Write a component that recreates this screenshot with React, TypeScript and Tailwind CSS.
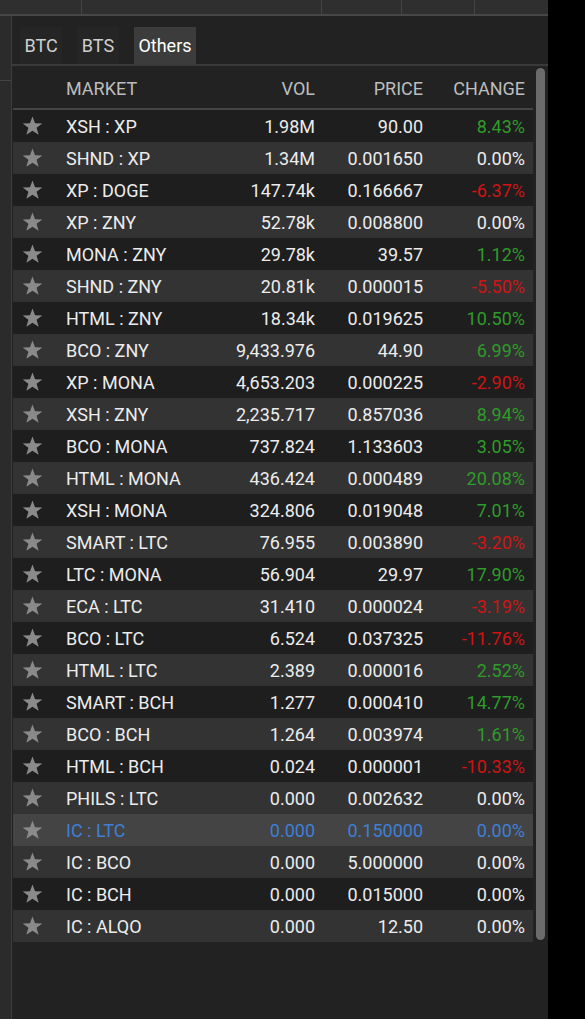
import React from "react";

type Market = {
  pair: string;
  vol: string;
  price: string;
  change: string;
  dir: "up" | "down" | "flat";
};

const markets: Market[] = [
  { pair: "XSH : XP", vol: "1.98M", price: "90.00", change: "8.43%", dir: "up" },
  { pair: "SHND : XP", vol: "1.34M", price: "0.001650", change: "0.00%", dir: "flat" },
  { pair: "XP : DOGE", vol: "147.74k", price: "0.166667", change: "-6.37%", dir: "down" },
  { pair: "XP : ZNY", vol: "52.78k", price: "0.008800", change: "0.00%", dir: "flat" },
  { pair: "MONA : ZNY", vol: "29.78k", price: "39.57", change: "1.12%", dir: "up" },
  { pair: "SHND : ZNY", vol: "20.81k", price: "0.000015", change: "-5.50%", dir: "down" },
  { pair: "HTML : ZNY", vol: "18.34k", price: "0.019625", change: "10.50%", dir: "up" },
  { pair: "BCO : ZNY", vol: "9,433.976", price: "44.90", change: "6.99%", dir: "up" },
  { pair: "XP : MONA", vol: "4,653.203", price: "0.000225", change: "-2.90%", dir: "down" },
  { pair: "XSH : ZNY", vol: "2,235.717", price: "0.857036", change: "8.94%", dir: "up" },
  { pair: "BCO : MONA", vol: "737.824", price: "1.133603", change: "3.05%", dir: "up" },
  { pair: "HTML : MONA", vol: "436.424", price: "0.000489", change: "20.08%", dir: "up" },
  { pair: "XSH : MONA", vol: "324.806", price: "0.019048", change: "7.01%", dir: "up" },
  { pair: "SMART : LTC", vol: "76.955", price: "0.003890", change: "-3.20%", dir: "down" },
  { pair: "LTC : MONA", vol: "56.904", price: "29.97", change: "17.90%", dir: "up" },
  { pair: "ECA : LTC", vol: "31.410", price: "0.000024", change: "-3.19%", dir: "down" },
  { pair: "BCO : LTC", vol: "6.524", price: "0.037325", change: "-11.76%", dir: "down" },
  { pair: "HTML : LTC", vol: "2.389", price: "0.000016", change: "2.52%", dir: "up" },
  { pair: "SMART : BCH", vol: "1.277", price: "0.000410", change: "14.77%", dir: "up" },
  { pair: "BCO : BCH", vol: "1.264", price: "0.003974", change: "1.61%", dir: "up" },
  { pair: "HTML : BCH", vol: "0.024", price: "0.000001", change: "-10.33%", dir: "down" },
  { pair: "PHILS : LTC", vol: "0.000", price: "0.002632", change: "0.00%", dir: "flat" },
  { pair: "IC : LTC", vol: "0.000", price: "0.150000", change: "0.00%", dir: "flat" },
  { pair: "IC : BCO", vol: "0.000", price: "5.000000", change: "0.00%", dir: "flat" },
  { pair: "IC : BCH", vol: "0.000", price: "0.015000", change: "0.00%", dir: "flat" },
  { pair: "IC : ALQO", vol: "0.000", price: "12.50", change: "0.00%", dir: "flat" },
];

const SELECTED = "IC : LTC";

const Star = () => (
  <svg width="21" height="20" viewBox="0 0 24 23" className="text-[#8a8a8a]">
    <polygon
      fill="currentColor"
      points="12,0.5 14.9,8.2 23.3,8.5 16.7,13.6 19.1,21.7 12,17 4.9,21.7 7.3,13.6 0.7,8.5 9.1,8.2"
    />
  </svg>
);

const changeColor = (m: Market) => {
  if (m.dir === "up") return "text-[#2f9b2a]";
  if (m.dir === "down") return "text-[#d01313]";
  return "text-[#ececec]";
};

const MarketRow = ({ data, index }: { data: Market; index: number }) => {
  const selected = data.pair === SELECTED;
  const bg = selected ? "bg-[#444444]" : index % 2 === 1 ? "bg-[#333333]" : "bg-[#1e1e1e]";
  const text = selected ? "text-[#3f7fd6]" : "text-[#ececec]";
  return (
    <div className={`flex h-[32px] items-center ${bg} ${text}`}>
      <div className="flex w-[38px] justify-center">
        <Star />
      </div>
      <div className="w-[174px] pl-[15px]">{data.pair}</div>
      <div className="w-[90px] text-right">{data.vol}</div>
      <div className="w-[108px] text-right">{data.price}</div>
      <div className={`w-[102px] text-right ${selected ? "" : changeColor(data)}`}>
        {data.change}
      </div>
    </div>
  );
};

const Tab = ({ label, active, width }: { label: string; active?: boolean; width: string }) => (
  <div
    className={`flex h-[37px] items-center justify-center ${width} ${
      active ? "bg-[#3c3c3c] text-white" : "bg-[#252525] text-[#cfcfcf]"
    }`}
  >
    {label}
  </div>
);

export default function App() {
  return (
    <div
      className="flex h-[1019px] w-[585px] overflow-hidden bg-black text-[18px]"
      style={{ fontFamily: "Roboto, 'Noto Sans', sans-serif" }}
    >
      <div className="flex w-[548px] flex-col">
        {/* top strip */}
        <div className="flex h-[16px] border-b-2 border-[#474747] bg-[#2f2f2f]">
          <div className="w-[82px] border-r border-[#444]" />
          <div className="w-[240px] border-r border-[#444]" />
          <div className="w-[80px] border-r border-[#444]" />
          <div className="w-[73px] border-r border-[#444]" />
          <div className="flex-1" />
        </div>

        <div className="flex flex-1">
          {/* left strip */}
          <div className="w-[12px] border-r border-[#3d3d3d] bg-[#2b2b2b]">
            <div className="mt-[64px] border-b border-[#444]" />
          </div>

          {/* main panel */}
          <div className="flex flex-1 flex-col bg-[#222222]">
            <div className="flex gap-[15px] pt-[11px] pl-[8px]">
              <Tab label="BTC" width="w-[42px]" />
              <Tab label="BTS" width="w-[42px]" />
              <Tab label="Others" width="w-[62px]" active />
            </div>
            <div className="h-[2px] bg-[#3a3a3a]" />

            <div className="flex gap-[3px] pr-[3px]">
              <div className="w-[521px] pl-[1px]">
                <div className="flex h-[44px] items-center border-b-2 border-[#444] pt-[3px] text-[#bdbdbd]">
                  <div className="w-[38px]" />
                  <div className="w-[174px] pl-[15px]">MARKET</div>
                  <div className="w-[90px] text-right">VOL</div>
                  <div className="w-[108px] text-right">PRICE</div>
                  <div className="w-[102px] text-right">CHANGE</div>
                </div>
                {markets.map((m, i) => (
                  <MarketRow key={m.pair} data={m} index={i} />
                ))}
              </div>
              <div className="mt-[2px] h-[872px] w-[9px] rounded-full bg-[#6b6b6b]" />
            </div>
          </div>
        </div>
      </div>
    </div>
  );
}
